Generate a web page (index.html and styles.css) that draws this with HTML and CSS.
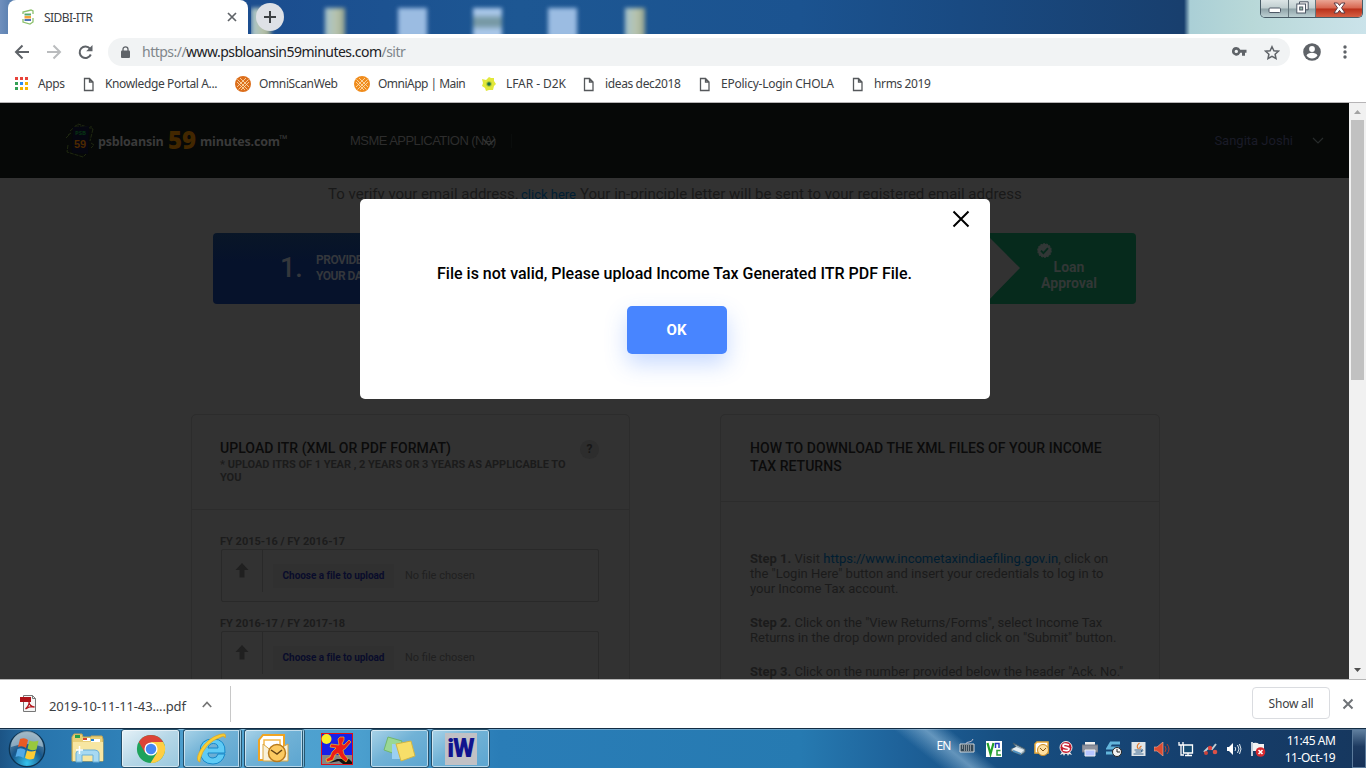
FILE: index.html
```
<!DOCTYPE html>
<html lang="en">
<head>
<meta charset="utf-8">
<title>SIDBI-ITR</title>
<link rel="stylesheet" href="styles.css">
</head>
<body>
<svg class="defs" width="0" height="0">
  <symbol id="doc" viewBox="0 0 12 16"><path d="M1.500 2.500h5l3.500 3.500v8.500H1.500zM6.500 2.500v3.500h3.500" fill="none" stroke="#55585b" stroke-width="1.300"/></symbol>
  <symbol id="omni" viewBox="0 0 16 16"><circle cx="8" cy="8" r="8"/><path d="M2.500 3.500l10 10M5 2l9 9M2 6l8 8M13.500 3.500l-10 10M11 2L2 11M14 6l-8 8" stroke="#ffe3b8" stroke-width=".8"/></symbol>
  <symbol id="up" viewBox="0 0 14 15"><path d="M7 0l6.500 7H9.500v7.500h-5V7H.5z" fill="#202020"/></symbol>
</svg>
<header class="titlebar">
  <div class="tab">
    <svg width="14" height="16" viewBox="0 0 14 16"><path d="M2 5V3l8-2 2 1v3M12 9v4l-3 2-7-2v-3" fill="none" stroke="#8cc06c" stroke-width="1.300"/><path d="M3.500 4.500h6.500v2h-6.500z" fill="#58aa68"/><path d="M3.500 7H10v2.500H3.500z" fill="#f3a33b"/><path d="M3.500 10H10v2H3.500z" fill="#4c72b5"/></svg>
    <span class="tab-name">SIDBI-ITR</span>
    <svg width="10" height="10" viewBox="0 0 10 10"><path d="M1 1l8 8M9 1L1 9" stroke="#5f6368" stroke-width="1.700"/></svg>
  </div>
  <div class="newtab"><svg width="14" height="14" viewBox="0 0 14 14"><path d="M7 1v12M1 7h12" stroke="#3c4043" stroke-width="2"/></svg></div>
  <div class="desktop"><i class="folder"></i><i class="folder"></i><i class="sheet"></i><i class="sheet striped"></i><i class="sheet"></i><i class="folder"></i></div>
  <div class="aero">
    <div class="winbtns">
      <span class="wb min"><svg width="14" height="7" viewBox="0 0 14 7"><rect x="1" y="1" width="11.500" height="4.500" rx="1" fill="#fff" stroke="#4e5866"/></svg></span>
      <span class="wb max"><svg width="13" height="13" viewBox="0 0 13 13"><path d="M3.500 3V.8h8.700v8H10" fill="#eee" stroke="#4e5866"/><rect x=".8" y="3" width="8.700" height="9" fill="#fff" stroke="#4e5866"/><rect x="3.700" y="6" width="3" height="3" fill="#9ba" stroke="#4e5866"/></svg></span>
      <span class="wb cls"><svg width="13" height="12" viewBox="0 0 13 12"><path d="M1 1h3.500l2 2.500L8.500 1H12L8.500 5.800 12 11H8.500l-2-2.700-2 2.700H1l3.500-5.200z" fill="#fff" stroke="#5a3a44"/></svg></span>
    </div>
  </div>
</header>
<nav class="toolbar">
  <svg class="nav-ico" width="64" height="16" viewBox="0 0 64 16" fill="none" stroke-width="2"><path d="M15 8H2.500M8.500 1.500L2 8l6.500 6.500" stroke="#5f6368"/><path d="M33 8h12.500M39.500 1.500L46 8l-6.500 6.500" stroke="#babcbe"/></svg>
  <svg class="reload" width="15" height="15" viewBox="0 0 15 15"><path d="M12.800 9.500A5.800 5.800 0 1 1 12 3.600" fill="none" stroke="#5f6368" stroke-width="2"/><path d="M14.500 0v6.300H8.200z" fill="#5f6368"/></svg>
  <div class="omnibox">
    <svg width="9" height="13" viewBox="0 0 9 13"><rect y="4.500" width="9" height="7.500" rx="1" fill="#5f6368"/><path d="M2 5V3.300a2.500 2.500 0 0 1 5 0V5" fill="none" stroke="#5f6368" stroke-width="1.300"/></svg>
    <span class="url">https://<b>www.psbloansin59minutes.com</b>/sitr</span>
    <svg class="key" width="15" height="9" viewBox="0 0 15 9"><path fill-rule="evenodd" d="M4.300 0a4.300 4.300 0 1 0 4 5.800h1.700v3h3V5.800H14.500v-3H8.300A4.300 4.300 0 0 0 4.300 0zm0 2.700a1.700 1.700 0 1 1 0 3.400 1.700 1.700 0 0 1 0-3.400z" fill="#5f6368"/></svg>
    <svg width="16" height="15" viewBox="0 0 16 15"><path d="M8 1.700l1.900 4 4.500.5-3.300 3 .9 4.300L8 11.300l-4 2.200.9-4.300-3.300-3 4.500-.5z" fill="none" stroke="#5f6368" stroke-width="1.500"/></svg>
  </div>
  <svg class="person" width="18" height="18" viewBox="0 0 18 18"><circle cx="9" cy="9" r="8.800" fill="#5f6368"/><circle cx="9" cy="6" r="2.900" fill="#fff"/><path d="M3.500 12.500c1.500-3.600 9.500-3.600 11 0-2.500 4-8.500 4-11 0z" fill="#fff"/></svg>
  <svg class="dots" width="4" height="14" viewBox="0 0 4 14" fill="#5f6368"><circle cx="2" cy="2" r="1.700"/><circle cx="2" cy="7" r="1.700"/><circle cx="2" cy="12" r="1.700"/></svg>
</nav>
<nav class="bookmarks">
  <span class="bm"><svg width="13" height="13" viewBox="0 0 13 13"><path d="M0 0h3v3H0zM5 0h3v3H5zM10 0h3v3h-3z" fill="#e8433a"/><path d="M0 5h3v3H0zM0 10h3v3H0z" fill="#34a055"/><path d="M5 5h3v3H5z" fill="#2a8cf4"/><path d="M10 5h3v3h-3zM5 10h3v3H5zM10 10h3v3h-3z" fill="#f5b400"/></svg><em>Apps</em></span>
  <span class="bm"><svg width="12" height="16"><use href="#doc"/></svg><em>Knowledge Portal A...</em></span>
  <span class="bm"><svg width="16" height="16" fill="#dc6e1b"><use href="#omni"/></svg><em>OmniScanWeb</em></span>
  <span class="bm"><svg width="16" height="16" fill="#f08c1c"><use href="#omni"/></svg><em class="tight">OmniApp | Main</em></span>
  <span class="bm"><svg width="14" height="16" viewBox="0 0 14 16"><path d="M7 1l2 1 3 0 0 3 2 3-2 2-1 4-4 0-3 1-1-3-3-2 1-3-1-4 4 1z" fill="#e2e83a"/><circle cx="7" cy="8" r="2.800" fill="#a5c438"/><circle cx="7" cy="8" r="1.800" fill="#1a6e48"/></svg><em class="loose">LFAR - D2K</em></span>
  <span class="bm"><svg width="12" height="16"><use href="#doc"/></svg><em>ideas dec2018</em></span>
  <span class="bm"><svg width="12" height="16"><use href="#doc"/></svg><em class="mid">EPolicy-Login CHOLA</em></span>
  <span class="bm"><svg width="12" height="16"><use href="#doc"/></svg><em>hrms 2019</em></span>
</nav>
<section class="viewport">
  <main class="page">
    <header class="site-head">
      <svg class="logo" width="31" height="36" viewBox="0 0 31 36"><path d="M5 8L13 1l15 5M28 6l-3 12M3 22l-1 7 16 5 3-3M10 3l17 1M3 12l3-2M1 15l4-4M26 20l3 2-3 3" fill="none" stroke="#1f2810" stroke-dasharray="4 1"/><path d="M8 4l16-1-1 28-16-1z" fill="#050610"/><text x="10" y="12" class="lg-psb">PSB</text><text x="9" y="25" class="lg-59">59</text></svg>
      <span class="br br-a">psbloansin</span><span class="br-59">59</span><span class="br br-b">minutes.com</span><span class="br-tm">™</span>
      <span class="msme">MSME APPLICATION (NA)</span>
      <svg class="chev-a" width="14" height="9" viewBox="0 0 14 9"><path d="M1 1l6 6 6-6" fill="none" stroke="#323534" stroke-width="1.500"/></svg>
      <i class="head-sep"></i>
      <span class="user">Sangita Joshi</span>
      <svg width="12" height="8" viewBox="0 0 12 8"><path d="M1 1l5 5 5-5" fill="none" stroke="#272b2b" stroke-width="1.200"/></svg>
    </header>
    <p class="verify"><span class="v-a">To verify your email address.</span><a>click here</a><span class="v-b">Your in-principle letter will be sent to your registered email address</span></p>
    <div class="progress">
      <div class="step-one"><span class="num">1.</span><span class="lbl">PROVIDE<br>YOUR DATA</span></div>
      <div class="step-two">
        <svg width="15" height="15" viewBox="0 0 15 15"><circle cx="7.500" cy="7.500" r="6.700" fill="#323736" stroke="#323736" stroke-width="1.200" stroke-dasharray="2 1"/><path d="M4 7.700l2.400 2.500 4.600-5" fill="none" stroke="#062a1c" stroke-width="1.800"/></svg>
        <span>Loan<br>Approval</span>
      </div>
    </div>
    <div class="cards">
      <article class="card">
        <div class="card-head tall"><div><h2>UPLOAD ITR (XML OR PDF FORMAT)</h2><small>* UPLOAD ITRS OF 1 YEAR , 2 YEARS OR 3 YEARS AS APPLICABLE TO<br>YOU</small></div><b class="help">?</b></div>
        <div class="files">
          <label>FY 2015-16 / FY 2016-17</label>
          <div class="file"><span class="up"><svg width="14" height="15"><use href="#up"/></svg></span><span class="choose">Choose a file to upload</span><span class="none">No file chosen</span></div>
          <label>FY 2016-17 / FY 2017-18</label>
          <div class="file"><span class="up"><svg width="14" height="15"><use href="#up"/></svg></span><span class="choose">Choose a file to upload</span><span class="none">No file chosen</span></div>
        </div>
      </article>
      <article class="card">
        <div class="card-head"><h2>HOW TO DOWNLOAD THE XML FILES OF YOUR INCOME<br>TAX RETURNS</h2></div>
        <div class="steps">
          <p><b>Step 1.</b> Visit <a>https://www.incometaxindiaefiling.gov.in</a>, click on<br>the "Login Here" button and insert your credentials to log in to<br>your Income Tax account.</p>
          <p><b>Step 2.</b> Click on the "View Returns/Forms", select Income Tax<br>Returns in the drop down provided and click on "Submit" button.</p>
          <p><b>Step 3.</b> Click on the number provided below the header "Ack. No."</p>
        </div>
      </article>
    </div>
    <div class="modal">
      <svg class="close" width="18" height="18" viewBox="0 0 18 18"><path d="M1.500 1.500l15 15M16.500 1.500l-15 15" stroke="#000" stroke-width="2"/></svg>
      <p>File is not valid, Please upload Income Tax Generated ITR PDF File.</p>
      <button>OK</button>
    </div>
  </main>
  <aside class="scroll"><svg width="7" height="4" viewBox="0 0 7 4"><path d="M0 4l3.500-4L7 4z" fill="#a3a3a3"/></svg><i class="thumb"></i><svg class="dn" width="7" height="4" viewBox="0 0 7 4"><path d="M0 0h7L3.500 4z" fill="#505050"/></svg></aside>
</section>
<section class="downloads">
  <svg class="pdf" width="17" height="17" viewBox="0 0 17 17"><path d="M3.500.5h9l3 3v13h-12z" fill="#f5f5f5" stroke="#777"/><path d="M12.500.5v3h3" fill="none" stroke="#777"/><path d="M0 2h11v5H0z" fill="#b01218"/><path d="M5.500 14c2-2 4-5 3.500-7 0 3 3 5 5.500 5-3-.8-6 0-9 2z" fill="none" stroke="#b3161c" stroke-width="1.300"/></svg>
  <span class="fname">2019-10-11-11-43....pdf</span>
  <svg class="caret" width="10" height="7" viewBox="0 0 10 7"><path d="M.8 6L5 1.500 9.200 6" fill="none" stroke="#757575" stroke-width="1.700"/></svg>
  <i class="dl-sep"></i>
  <button class="showall">Show all</button>
  <svg width="12" height="12" viewBox="0 0 12 12"><path d="M1.500 1.500l9 9M10.500 1.500l-9 9" stroke="#6f7377" stroke-width="2"/></svg>
</section>
<footer class="taskbar">
  <svg class="orb" width="38" height="38" viewBox="0 0 38 38">
    <defs><radialGradient id="og" cx=".5" cy=".9" r=".9"><stop offset="0" stop-color="#35c4ee"/><stop offset=".5" stop-color="#17568a"/><stop offset="1" stop-color="#7b98a8"/></radialGradient></defs>
    <circle cx="19" cy="19" r="17.700" fill="url(#og)" stroke="#0d3452" stroke-width="1.300"/><path d="M3 17a16 16 0 0 1 32 0q-16-6-32 0z" fill="#c8d8e2" opacity=".55"/>
    <path d="M12 9q5-2 8 1l-2 8q-4-3-8-1z" fill="#ea5b24"/><path d="M21.500 10.500q4 2 9 0l-2 9q-5 2-9-1z" fill="#98c83d"/><path d="M9.500 19q4-2 8 1l-2 8q-4-3-8-1z" fill="#52a9e6"/><path d="M19 20.500q4 2 9 0l-2 8q-5 2-9-.5z" fill="#fccc35"/>
  </svg>
  <svg class="explorer" width="34" height="32" viewBox="0 0 34 32"><path d="M1 4l2-3h8l1 3h8V3h11l1 3v22H1z" fill="#e9cf78" stroke="#c6a751"/><path d="M4 2h5v3H4z" fill="#25a04b"/><path d="M12 5h7v3h-7z" fill="#fff"/><path d="M12 5h4v2h-4z" fill="#d64432"/><path d="M20 6h9v3h-9z" fill="#fff"/><path d="M20 6h3v2h-3z" fill="#2584d4"/><path d="M2 9h30v19H2z" fill="#f7e6a2"/><path d="M5 29V20q1-3 4-3h15q3 0 4 3v9h-6v-7H11v7z" fill="#a7d9f2" stroke="#68afd8"/><path d="M5 17h7M8.500 13v8" stroke="#fff" stroke-width="1.500"/></svg>
  <div class="task on"><svg width="30" height="30" viewBox="0 0 32 32"><circle cx="16" cy="16" r="15" fill="#1da25b"/><path d="M3 8.500A15 15 0 0 1 29 8.500H16L9.500 19.700z" fill="#dc4437"/><path d="M29 8.500A15 15 0 0 1 15.500 31l7-11.300L16 8.500z" fill="#ffce43"/><circle cx="16" cy="16" r="7" fill="#fff"/><circle cx="16" cy="16" r="5.600" fill="#4687f4"/></svg></div>
  <div class="task stack"><svg width="34" height="34" viewBox="0 0 34 34"><path d="M30 22h-7q-1 4-5 4-5 0-5-5h17q1-14-12-14Q5 7 5 19.500 6 32 18 32q9 0 12-10zM13 16q1-4.500 5.500-4.500T23 16z" fill="#5fcbf5" stroke="#1688c9" fill-rule="evenodd"/><path d="M5 30C-3 29 9 5 27 2q5-1 3 4 0-3-4-1Q9 11 5 28z" fill="#f9cf35" stroke="#e0a51e" stroke-width=".7"/></svg></div>
  <div class="task stack wide"><svg width="34" height="32" viewBox="0 0 34 32"><path d="M6 2h21v20l-5 5H2V7z" fill="#fff" stroke="#f0a422" stroke-width="2"/><path d="M7 7h16v16H7z" fill="none" stroke="#f5b84a" stroke-width="1.500"/><path d="M6 11l10 8 15-8v17H6z" fill="#f9f1d9" stroke="#dba640"/><circle cx="20" cy="20" r="8.500" fill="#fcca61" stroke="#b87b1d" stroke-width="1.500"/><path d="M14 17l6 4 5-4" fill="none" stroke="#654516" stroke-width="1.500"/></svg></div>
  <svg class="runner" width="32" height="32" viewBox="0 0 32 32"><path d="M0 0h32v32H0z" fill="#e11018"/><path d="M1 1h30v21H1z" fill="#1720e8"/><path d="M1 22h30v9H1z" fill="#858585"/><circle cx="5.500" cy="6" r="5" fill="#f9ee28"/><path d="M8 30l8-4h12l3 3v2h-9l-4-3z" fill="#111"/><path d="M17 6l2-2h4v3l-2 4 2 1 5-5 2 2-6 7-2 1 1 4 4 5-2 3-5-4-3-5-3 2-2 5-6 2-1-3 4-2 2-5 4-4-6-1 1-3 8 1z" fill="#ed1b18" stroke="#f4e520" stroke-width=".6"/></svg>
  <div class="task notes"><svg width="34" height="28" viewBox="0 0 34 28"><path d="M5 2l14 4-4 14-14-5z" fill="#9ad894" stroke="#71b66e"/><path d="M9 9h15v15H9z" fill="#9bd0f2"/><path d="M13 9l15-3 4 15-14 5z" fill="#f7df69" stroke="#d1b646"/></svg></div>
  <div class="task iw"><span>iW</span></div>
  <div class="tray">
    <span class="lang">EN</span>
    <svg class="t1" width="16" height="14" viewBox="0 0 16 14"><path d="M1 5h14v8H1z" fill="#334755" stroke="#d4d9dc"/><path d="M3 7h10M3 9h10M5 11h7" stroke="#ddd" stroke-dasharray="1 1"/><path d="M7 5q0-2 3-2t4-3" fill="none" stroke="#bbc"/></svg>
    <svg width="16" height="16" viewBox="0 0 16 16"><path d="M0 0h16v16H0z" fill="#fff"/><path d="M1.500 2l3 11 3-11" fill="none" stroke="#23a12b" stroke-width="2.200"/><path d="M9.500 7V2.500H13V7" fill="none" stroke="#2539bf" stroke-width="1.500"/><path d="M14.500 9.500h-3.500v4.500h4" fill="none" stroke="#2c9f39" stroke-width="1.500"/></svg>
    <svg width="16" height="14" viewBox="0 0 16 14"><path d="M3 1l12 6v3l-4 3-10-4V7l5-2z" fill="#9fb3bf" stroke="#445b68"/><path d="M2 7l4-2 8 3-3 3z" fill="#e6eef2"/><path d="M3 9l8 3" stroke="#4b91c3" stroke-width="1.500"/></svg>
    <svg width="16" height="16" viewBox="0 0 16 16"><path d="M3 1h11v11H1V3z" fill="#fff" stroke="#edac38" stroke-width="1.500"/><circle cx="9" cy="9" r="5.500" fill="#ffe0a0" stroke="#cb8a20"/><path d="M6 7l3 3 3-3" fill="none" stroke="#815314"/></svg>
    <svg width="14" height="16" viewBox="0 0 14 16"><path d="M4 9l-3 5 3-1 1 2 2-4 2 4 1-2 3 1-4-6z" fill="#ececec"/><circle cx="7" cy="6.500" r="6" fill="#c51d2f" stroke="#eee"/><path d="M10 4Q4 2 4 5c0 2 6 1 6 3s-3 2-6 1" fill="none" stroke="#fff" stroke-width="1.800"/></svg>
    <svg width="16" height="16" viewBox="0 0 16 16"><path d="M3 1h10v4H3z" fill="#eee"/><path d="M0 4h16v7H0z" fill="#8f939e" stroke="#6e7582"/><path d="M3 9h10v6H3z" fill="#b7c6ff" stroke="#eee"/></svg>
    <svg width="16" height="16" viewBox="0 0 16 16"><path d="M14 2H5L2 7h9l-3 5H0" fill="none" stroke="#63b5db" stroke-width="3"/><circle cx="11" cy="11" r="4.500" fill="#f2f2f2" stroke="#222"/><path d="M11 8v3h3" fill="none" stroke="#222"/></svg>
    <svg width="15" height="16" viewBox="0 0 14 16"><path d="M0 1h14v14H0z" fill="#e0e5e8"/><path d="M8 2q-4 3-1 6M10 5q-3 2-1 3" fill="none" stroke="#df792e" stroke-width="1.200"/><path d="M3 9h7v2H4M2 13h10M10 8q3 1 0 3" fill="none" stroke="#416b91"/></svg>
    <svg width="16" height="14" viewBox="0 0 16 14"><path d="M0 5h3l6-5v14L3 9H0z" fill="#db4b31" stroke="#eeb1a0" stroke-width=".6"/><path d="M11 4q2 3 0 6M13 2q4 5 0 10" fill="none" stroke="#b34132"/></svg>
    <svg width="16" height="16" viewBox="0 0 16 16"><path d="M5.500 4h9v8h-9z" fill="#164c73" stroke="#fff" stroke-width="1.300"/><path d="M7 14.500h7M10 12v2M1 1v3h4V1M3 4v10h3" fill="none" stroke="#fff" stroke-width="1.300"/></svg>
    <svg width="15" height="14" viewBox="0 0 15 14"><path d="M1 10l4-4 4 1 4-5" fill="none" stroke="#bfcdd3" stroke-width="2"/><circle cx="7" cy="6" r="2.200" fill="#e0443f"/><circle cx="3" cy="11" r="2" fill="#ca433c"/><circle cx="12" cy="10" r="2.300" fill="#db5147"/></svg>
    <svg width="15" height="14" viewBox="0 0 15 14"><path d="M0 5h2l4-4v12L2 9H0z" fill="#fff"/><path d="M8 5q1.500 2 0 4M10.500 3q3 4 0 8M12.500 2q3 5 0 10" fill="none" stroke="#dfe9ee"/></svg>
    <svg width="15" height="16" viewBox="0 0 15 16"><path d="M1 1v14" stroke="#fff" stroke-width="1.500"/><path d="M2 2q4-1 6 1h5v7H2z" fill="#f3f3f3"/><circle cx="9.500" cy="11" r="4.800" fill="#d7292f"/><path d="M7.500 9l4 4M11.500 9l-4 4" stroke="#fff" stroke-width="1.600"/></svg>
  </div>
  <div class="clock"><span>11:45 AM</span><span class="date">11-Oct-19</span></div>
  <i class="peek"></i>
</footer>
</body>
</html>
```
FILE: styles.css
```
* { box-sizing: border-box; }
body { margin: 0; width: 1366px; height: 768px; overflow: hidden; display: flex; flex-direction: column; background: #fff; font-family: "Noto Sans", sans-serif; font-size: 12px; color: #3c4043; }
.defs { position: absolute; }
svg { display: block; flex: none; }
p, h2 { margin: 0; }
em, i { font-style: normal; }
a { text-decoration: none; }
button { font: inherit; border: 0; padding: 0; }

/* window frame */
.titlebar { height: 34px; flex: none; display: flex; background: linear-gradient(90deg, #6f8fbd 0, #5a80b0 10px, #1b4d8f 250px, #1d5793 520px, #1b5390 800px, #194a82 960px, #183f6e 1180px, #183f6e 1184px, #aacfd6 1190px, #b8d8d8 1250px, #cbe3ea 1366px); }
.tab { margin-left: 8px; width: 240px; background: #fff; border-radius: 8px 8px 0 0; display: flex; align-items: center; padding: 0 11px 0 13px; }
.tab-name { flex: 1; margin-left: 9px; letter-spacing: -.55px; white-space: nowrap; }
.newtab { width: 28px; height: 28px; margin: 3px 0 0 8px; border-radius: 50%; background: #dee1e6; display: flex; align-items: center; justify-content: center; z-index: 1; }
.desktop { height: 34px; width: 904px; display: flex; overflow: hidden; padding-top: 8px; margin-left: -33px; }
.desktop i { height: 30px; filter: blur(2px); flex: none; }
.folder { width: 20px; background: linear-gradient(90deg, #a5c2cc, #b8c3ab 60%, #91a08c); }
.folder + .folder { margin-left: 54px; }
.sheet { width: 29px; background: #9bbce2; margin-left: 53px; }
.sheet + .sheet { margin-left: 46px; }
.striped { background: linear-gradient(#a9c7e9 6px, #7698a4 11px, #7698a4 17px, #a9c7e9 22px); }
.sheet + .folder { margin-left: 48px; }
.aero { flex: 1; display: flex; justify-content: flex-end; padding-right: 3px; }
.winbtns { display: flex; height: 18px; border: 1px solid #485b66; border-top: 0; border-radius: 0 0 5px 5px; overflow: hidden; width: 103px; }
.wb { display: flex; align-items: center; justify-content: center; background: linear-gradient(#dce5e6, #bfcdcf 48%, #8fa3a8 52%, #bccfd2); border-right: 1px solid #64747b; padding-bottom: 2px; }
.min { width: 28px; padding: 4px 0 0; }
.max { width: 27px; }
.cls { flex: 1; border: 0; background: linear-gradient(#eaa594, #d7654e 48%, #b9301a 52%, #d65f43); }

/* navigation toolbar */
.toolbar { height: 36px; flex: none; display: flex; align-items: center; padding-left: 14px; }
.omnibox { margin-left: 15px; width: 1182px; height: 28px; border-radius: 14px; background: #f1f3f4; display: flex; align-items: center; padding: 0 10px 0 13px; }
.url { margin-left: 12px; font-size: 14px; letter-spacing: -.52px; color: #80868b; white-space: nowrap; padding-bottom: 1px; }
.url b { font-weight: 400; color: #202124; }
.key { margin: -2px 17px 0 auto; }
.person { margin-left: 13px; }
.dots { margin-left: 22px; }
.bookmarks { height: 33px; flex: none; display: grid; grid-template-columns: 68px 152px 119px 128px 101px 116px 153px auto; align-items: center; padding: 0 0 5px 15px; border-bottom: 1px solid #b6b4b6; }
.bm { display: flex; align-items: center; white-space: nowrap; }
.bm em { letter-spacing: -.37px; margin-left: 10px; }
.bm svg[width="16"] + em { margin-left: 8px; }
.bm .tight { letter-spacing: -.52px; }
.bm .loose { letter-spacing: -.08px; }
.bm .mid { letter-spacing: -.25px; }

/* dimmed web page */
.viewport { height: 576px; flex: none; display: flex; }
.page { position: relative; width: 1349px; height: 576px; overflow: hidden; background: #323232; font-family: Roboto, sans-serif; color: #1b1b1b; }
.site-head { height: 75px; background: #060807; display: flex; align-items: center; padding: 0 25px 0 65px; white-space: nowrap; }
.lg-psb { font: bold 6px "Open Sans", sans-serif; fill: #073313; }
.lg-59 { font: bold 11px "Liberation Sans", sans-serif; fill: #4d2900; }
.br { font: bold 12.500px "Open Sans", sans-serif; color: #3a3a3a; padding-top: 2px; }
.br-a { width: 70px; margin-left: 2px; letter-spacing: -.2px; }
.br-59 { font: 800 24px/25px "Open Sans", sans-serif; color: #422700; width: 32px; padding-bottom: 3px; }
.br-b { width: 79px; letter-spacing: -.15px; }
.br-tm { font: bold 11px "Open Sans", sans-serif; color: #3a3a3a; width: 10px; padding-bottom: 4px; }
.msme { margin-left: 61px; width: 132px; font: 13px "Liberation Sans", sans-serif; letter-spacing: -.54px; color: #2d2d2d; }
.chev-a { margin-top: 4px; }
.head-sep { width: 1px; height: 14px; margin-left: 15px; background: #0a0d0c; }
.user { margin-left: auto; margin-right: 19px; font-size: 13px; color: #1a1b27; }
.verify { height: 30px; display: flex; padding-left: 328px; font-size: 15px; line-height: 32px; white-space: nowrap; color: #191919; }
.v-a { width: 193px; }
.verify a { width: 59px; font-size: 13px; line-height: 34px; color: #001e33; text-decoration: underline; }
.progress { display: flex; justify-content: space-between; margin: 25px 213px 0; height: 71px; }
.step-one { width: 260px; border-radius: 4px; background: linear-gradient(#091627, #06122b 40%); display: flex; padding-left: 67px; color: #34373c; }
.num { width: 36px; font-size: 27px; font-weight: 500; line-height: 70px; }
.lbl { font-weight: 700; font-size: 12px; line-height: 16px; padding-top: 19px; letter-spacing: -.5px; white-space: nowrap; }
.step-two { width: 176px; border-radius: 4px; background: #062a1c; clip-path: polygon(25px 0, 60px 35px, 25px 71px, 176px 71px, 176px 0); padding: 10px 38px 0 77px; color: #323736; font-weight: 700; font-size: 14px; line-height: 16px; text-align: center; }
.step-two span { display: block; margin: 1px -11px 0 -8px; }
.cards { display: flex; gap: 90px; margin: 110px 0 0 191px; align-items: flex-start; }
.card { width: 439px; height: 380px; border: 1px solid #2c2c2c; border-radius: 5px; }
.card + .card { width: 440px; }
.card-head { height: 87px; border-bottom: 1px solid #2c2c2c; padding: 24px 29px; display: flex; justify-content: space-between; white-space: nowrap; }
.tall { height: 95px; padding-left: 28px; }
.card h2 { font-size: 14px; line-height: 18px; font-weight: 500; letter-spacing: .04px; color: #0b0b0b; }
.card small { display: block; margin-top: 1px; font-size: 11px; line-height: 13px; font-weight: 700; letter-spacing: -.03px; color: #1b1b1b; }
.help { width: 19px; height: 19px; margin: 1px 1px 0 0; border-radius: 50%; background: #2d2d2d; color: #171717; font-size: 12px; line-height: 18px; text-align: center; }
.files { padding: 25px 29px; }
.files label { display: block; height: 14px; margin-left: -1px; font-size: 11px; line-height: 14px; font-weight: 700; color: #1c1c1c; }
.file { height: 53px; width: 378px; border: 1px solid #292929; border-radius: 2px; display: flex; margin-bottom: 15px; white-space: nowrap; }
.up { width: 41px; height: 42px; border-right: 1px solid #292929; padding: 13px; }
.choose { margin: 14px 0 0 10px; width: 121px; height: 24px; background: #303030; line-height: 24px; text-align: center; font-size: 10px; font-weight: 700; letter-spacing: -.05px; color: #090c2b; }
.none { margin: 14px 0 0 11px; font-size: 11px; line-height: 24px; color: #202020; }
.steps { padding: 49px 29px; font-size: 13px; line-height: 15px; white-space: nowrap; }
.steps p { margin-bottom: 19px; }
.steps b { font-weight: 700; }
.steps a { color: #001d31; }

/* message dialog sits above the page */
.modal { position: absolute; left: 360px; top: 96px; width: 630px; height: 200px; background: #fff; border-radius: 5px; color: #000; display: flex; flex-direction: column; align-items: center; white-space: nowrap; }
.close { align-self: flex-end; margin: 11px 20px 0 0; }
.modal p { margin: 36px 1px 0 0; font-size: 16px; line-height: 20px; font-weight: 500; }
.modal button { margin: 22px 0 0 4px; width: 100px; height: 48px; flex: none; border-radius: 5px; background: #4885ff; color: #fff; font-size: 15px; font-weight: 700; padding-right: 1px; box-shadow: 0 10px 22px rgba(72, 133, 255, .3); }
.scroll { width: 17px; background: #f1f1f1; display: flex; flex-direction: column; align-items: center; padding-top: 7px; }
.thumb { width: 13px; height: 260px; margin-top: 6px; background: #c1c1c1; }
.dn { margin: auto 0 7px; }

/* downloads shelf */
.downloads { height: 49px; flex: none; display: flex; align-items: center; padding: 0 12px 0 20px; border-top: 1px solid #b6b6b6; }
.pdf { margin-top: -2px; }
.fname { margin-left: 12px; width: 153px; font-size: 13px; letter-spacing: -.16px; padding-top: 4px; white-space: nowrap; }
.dl-sep { width: 1px; height: 36px; margin-left: 18px; background: #c8c8c8; }
.showall { width: 78px; height: 32px; margin: -2px 12px 0 auto; border: 1px solid #dadce0; border-radius: 4px; background: #fff; color: #3c4043; letter-spacing: -.2px; }

/* taskbar */
.taskbar { height: 40px; flex: none; display: flex; align-items: center; border-top: 1px solid #132c43; color: #fff; background: linear-gradient(39deg, transparent 592px, rgba(160, 198, 225, .55) 612px, transparent 628px), linear-gradient(90deg, #1c5485 0, #2875ad 40px, #2f80b7 120px, #53a5d2 200px, #4b9fce 360px, #2a7db7 500px, #267ab1 800px, #1e629a 900px, #174f82 1000px, #153e6c 1200px, #16375e 1366px); box-shadow: inset 0 1px 0 rgba(255, 255, 255, .3); }
.orb { margin-left: 8px; }
.explorer { margin: 0 16px 0 25px; }
.task { width: 59px; height: 39px; border: 1px solid #244f6a; border-radius: 3px; box-shadow: inset 0 0 0 1px rgba(255, 255, 255, .55); background: linear-gradient(145deg, #a9d3e8, #71b2d6 45%, #5ca5d0); display: flex; align-items: center; justify-content: center; margin-right: 3px; }
.on { background: linear-gradient(145deg, #e6f2f8, #b6d7e7 50%, #99c8de); }
.stack { border-right: 3px double #27566f; }
.wide { width: 61px; margin: 0 0 0 -1px; }
.runner { margin: 0 17px 0 16px; }
.notes { margin-right: 2px; }
.iw span { width: 32px; height: 32px; background: #c1c1c5; color: #10138e; font: 900 25px/32px Roboto, sans-serif; letter-spacing: -1px; text-align: center; }
.tray { display: grid; grid-template-columns: 16px 30px repeat(12, 24px); align-items: center; justify-items: center; margin-left: auto; }
.lang { width: 15px; font-size: 12px; letter-spacing: -.8px; margin-top: -6px; }
.t1 { margin-top: -5px; }
.clock { width: 54px; margin-left: 14px; display: flex; flex-direction: column; align-items: center; line-height: 17px; letter-spacing: -.45px; white-space: nowrap; }
.date { margin-left: -2px; }
.peek { width: 14px; height: 39px; margin-left: 14px; border: 1px solid #5b7a9b; background: linear-gradient(#5f7e9e, #1d3a60 45%, #163158); }
```
